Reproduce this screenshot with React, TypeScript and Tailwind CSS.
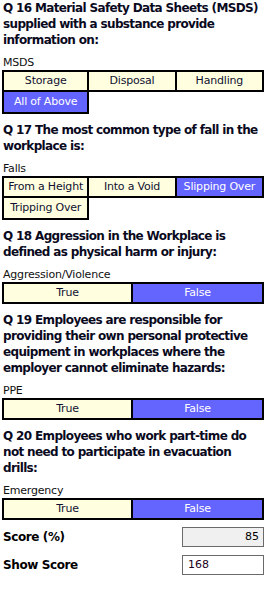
import React from "react";

type Question = {
  title: string;
  label: string;
  options: string[];
  selected: string;
  cols: number;
};

const questions: Question[] = [
  {
    title:
      "Q 16 Material Safety Data Sheets (MSDS) supplied with a substance provide information on:",
    label: "MSDS",
    options: ["Storage", "Disposal", "Handling", "All of Above"],
    selected: "All of Above",
    cols: 3,
  },
  {
    title: "Q 17 The most common type of fall in the workplace is:",
    label: "Falls",
    options: ["From a Height", "Into a Void", "Slipping Over", "Tripping Over"],
    selected: "Slipping Over",
    cols: 3,
  },
  {
    title: "Q 18 Aggression in the Workplace is defined as physical harm or injury:",
    label: "Aggression/Violence",
    options: ["True", "False"],
    selected: "False",
    cols: 2,
  },
  {
    title:
      "Q 19 Employees are responsible for providing their own personal protective equipment in workplaces where the employer cannot eliminate hazards:",
    label: "PPE",
    options: ["True", "False"],
    selected: "False",
    cols: 2,
  },
  {
    title:
      "Q 20 Employees who work part-time do not need to participate in evacuation drills:",
    label: "Emergency",
    options: ["True", "False"],
    selected: "False",
    cols: 2,
  },
];

function OptionGrid({ q }: { q: Question }) {
  return (
    <div className={q.cols === 3 ? "grid grid-cols-3" : "grid grid-cols-2"}>
      {q.options.map((opt, i) => {
        const firstCol = i % q.cols === 0;
        const firstRow = i < q.cols;
        const active = opt === q.selected;
        return (
          <div
            key={opt}
            className={
              "flex h-[22px] items-center justify-center whitespace-nowrap border-r-2 border-b-2 border-black tracking-[-0.2px] " +
              (firstCol ? "border-l-2 " : "") +
              (firstRow ? "border-t-2 " : "") +
              (active ? "bg-[#6464ff] text-white" : "bg-[#ffffe0] text-[#101030]")
            }
          >
            {opt}
          </div>
        );
      })}
    </div>
  );
}

export default function App() {
  return (
    <div
      className="w-[268px] bg-white pl-[2px] pr-[4px] text-[11px] text-black"
      style={{ fontFamily: '"DejaVu Sans", Verdana, sans-serif' }}
    >
      <div className="flex flex-col gap-[8px]">
        {questions.map((q) => (
          <section key={q.label}>
            <h2 className="pl-[1px] text-[12px] font-bold leading-[16px] tracking-[-0.65px] text-[#0a0a1e]">
              {q.title}
            </h2>
            <div className="mt-[7px] pl-[1px] leading-[15px] tracking-[-0.2px] text-[#101010]">
              {q.label}
            </div>
            <OptionGrid q={q} />
          </section>
        ))}
      </div>

      <div className="mt-[7px] flex items-center justify-between">
        <span className="pl-[1px] text-[12px] font-bold tracking-[-0.4px]">Score (%)</span>
        <div className="flex h-[20px] w-[82px] items-center justify-end border border-[#6a6a6a] bg-[#f0f0f0] px-[4px]">
          85
        </div>
      </div>
      <div className="mt-[8px] flex items-center justify-between">
        <span className="pl-[1px] text-[12px] font-bold tracking-[-0.4px]">Show Score</span>
        <div className="flex h-[20px] w-[82px] items-center border border-[#6a6a6a] bg-white px-[5px] text-[#200020]">
          168
        </div>
      </div>
    </div>
  );
}
